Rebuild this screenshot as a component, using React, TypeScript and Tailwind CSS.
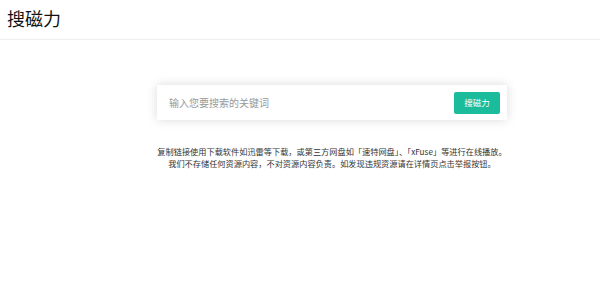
export default function App() {
  return (
    <div className="min-h-[290px] w-[600px] bg-white" style={{ fontFamily: '"Noto Sans CJK SC", "Noto Sans", sans-serif' }}>
      <header className="h-[40px] border-b border-[#eeeeee] flex items-center pl-[7px]">
        <h1 className="text-[18px] leading-none text-[#111] font-normal -mt-[3px]">搜磁力</h1>
      </header>
      <div className="flex flex-col items-center">
        <div className="mt-[45px] ml-[64px] w-[350px] h-[35px] bg-white shadow-[0_0_10px_rgba(0,0,0,0.15)] flex items-center justify-between pl-[12px] pr-[7px]">
          <span className="text-[10px] text-[#999] leading-none">输入您要搜索的关键词</span>
          <button className="h-[22px] w-[46px] bg-[#1abc9c] rounded-[2px] text-white text-[8.5px] leading-none">搜磁力</button>
        </div>
        <div className="mt-[25px] ml-[64px] text-center text-[8.2px] leading-[12px] text-[#333]">
          <p>复制链接使用下载软件如迅雷等下载，或第三方网盘如「速特网盘」、「xFuse」等进行在线播放。</p>
          <p>我们不存储任何资源内容，不对资源内容负责。如发现违规资源请在详情页点击举报按钮。</p>
        </div>
      </div>
    </div>
  );
}
